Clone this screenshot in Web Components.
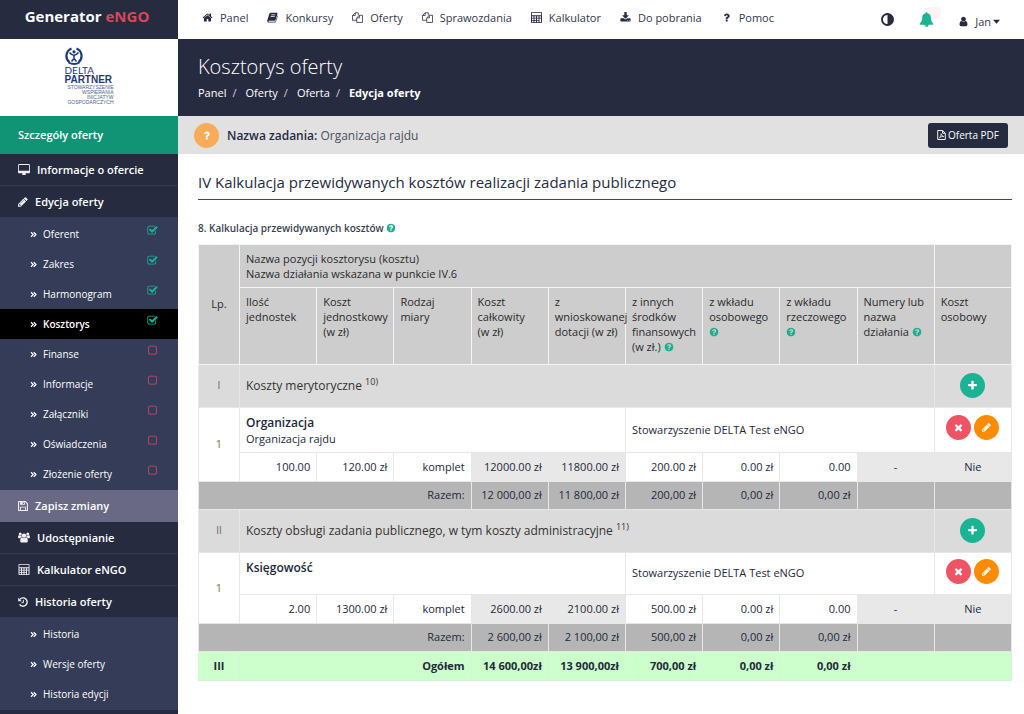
<!DOCTYPE html>
<html lang="pl">
<head>
<meta charset="utf-8">
<meta name="viewport" content="width=device-width, initial-scale=1">
<title>Generator eNGO – Kosztorys oferty</title>
<style>
  html, body { margin: 0; }
  body { font: 11px/15px "Open Sans", sans-serif; color: #23293b; background: #fff; }
</style>
</head>
<body>
<engo-app></engo-app>

<script>
/* ---------- icons ---------- */
const ICONS = {
  home: ['0 0 1792 1792', '<path d="M1472 992v480q0 26-19 45t-45 19h-384v-384h-256v384h-384q-26 0-45-19t-19-45v-480q0-1 .5-3t.5-3l575-474 575 474q1 2 1 6zm223-69l-62 74q-8 9-21 11h-3q-13 0-21-7l-692-577-692 577q-12 8-24 7-13-2-21-11l-62-74q-8-10-7-23.5t11-21.5l719-599q32-26 76-26t76 26l244 204v-195q0-14 9-23t23-9h192q14 0 23 9t9 23v408l219 182q10 8 11 21.5t-7 23.5z"/>'],
  user: ['0 0 1792 1792', '<path d="M1536 1399q0 109-62.5 187t-150.5 78h-854q-88 0-150.5-78t-62.5-187q0-85 8.5-160.5t31.500-152 58.500-131 94-89 134.500-34.500q131 128 313 128t313-128q76 0 134.500 34.500t94 89 58.500 131 31.500 152 8.500 160.500zm-256-887q0 159-112.500 271.500t-271.500 112.500-271.500-112.500-112.500-271.500 112.500-271.500 271.500-112.500 271.500 112.500 112.500 271.500z"/>'],
  pencil: ['128 128 1560 1560', '<path d="M491 1536l91-91-235-235-91 91v107h128v128h107zm523-928q0-22-22-22-10 0-17 7l-542 542q-7 7-7 17 0 22 22 22 10 0 17-7l542-542q7-7 7-17zm-54-192l416 416-832 832h-416v-416zm683 96q0 53-37 90l-166 166-416-416 166-165q36-38 90-38 53 0 91 38l235 234q37 39 37 91z"/>'],
  plus: ['0 0 1792 1792', '<path d="M1600 736v192q0 40-28 68t-68 28h-416v416q0 40-28 68t-68 28h-192q-40 0-68-28t-28-68v-416h-416q-40 0-68-28t-28-68v-192q0-40 28-68t68-28h416v-416q0-40 28-68t68-28h192q40 0 68 28t28 68v416h416q40 0 68 28t28 68z"/>'],
  times: ['0 0 1792 1792', '<path d="M1490 1322q0 40-28 68l-136 136q-28 28-68 28t-68-28l-294-294-294 294q-28 28-68 28t-68-28l-136-136q-28-28-28-68t28-68l294-294-294-294q-28-28-28-68t28-68l136-136q28-28 68-28t68 28l294 294 294-294q28-28 68-28t68 28l136 136q28 28 28 68t-28 68l-294 294 294 294q28 28 28 68z"/>'],
  help: ['0 0 1792 1792', '<path d="M1024 1376v-192q0-14-9-23t-23-9h-192q-14 0-23 9t-9 23v192q0 14 9 23t23 9h192q14 0 23-9t9-23zm256-672q0-88-55.500-163t-138.500-116-170-41q-243 0-371 213-15 24 8 42l132 100q7 6 19 6 16 0 25-12 53-68 86-92 34-24 86-24 48 0 85.500 26t37.500 59q0 38-20 61t-68 45q-63 28-115.500 86.500t-52.500 125.500v36q0 14 9 23t23 9h192q14 0 23-9t9-23q0-19 21.500-49.500t54.500-49.500q32-18 49-28.500t46-35 44.500-48 28-60.500 12.500-81zm384 192q0 209-103 385.500t-279.500 279.500-385.500 103-385.500-103-279.500-279.500-103-385.500 103-385.500 279.500-279.500 385.500-103 385.500 103 279.500 279.500 103 385.500z"/>'],
  question: ['0 0 1792 1792', '<path d="M1088 1256v240q0 16-12 28t-28 12h-240q-16 0-28-12t-12-28v-240q0-16 12-28t28-12h240q16 0 28 12t12 28zm316-600q0 54-15.500 101t-35 76.500-55 59.500-57.500 43.500-61 35.500q-41 23-68.500 65t-27.500 67q0 17-12 32.500t-28 15.500h-240q-15 0-25.500-18.500t-10.500-37.500v-45q0-83 65-156.500t143-108.500q59-27 84-56t25-76q0-42-46.500-74t-107.500-32q-65 0-108 29-35 25-107 115-13 16-31 16-12 0-25-8l-164-125q-13-10-15.500-25t5.500-28q160-266 464-266 80 0 161 31t146 83 106 127.500 41 158.500z"/>'],
  checked: ['0 0 1792 1792', '<path d="M1472 930v318q0 119-84.500 203.500t-203.500 84.500h-832q-119 0-203.500-84.500t-84.500-203.500v-832q0-119 84.500-203.500t203.500-84.500h832q63 0 117 25 15 7 18 23 3 17-9 29l-49 49q-10 10-23 10-3 0-9-2-23-6-45-6h-832q-66 0-113 47t-47 113v832q0 66 47 113t113 47h832q66 0 113-47t47-113v-254q0-13 9-22l64-64q10-10 23-10 6 0 12 3 20 8 20 29zm231-489l-814 814q-24 24-57 24t-57-24l-430-430q-24-24-24-57t24-57l110-110q24-24 57-24t57 24l263 263 647-647q24-24 57-24t57 24l110 110q24 24 24 57t-24 57z"/>'],
  unchecked: ['0 0 1792 1792', '<path d="M1312 256h-832q-66 0-113 47t-47 113v832q0 66 47 113t113 47h832q66 0 113-47t47-113v-832q0-66-47-113t-113-47zm288 160v832q0 119-84.500 203.500t-203.500 84.500h-832q-119 0-203.500-84.500t-84.500-203.500v-832q0-119 84.500-203.500t203.500-84.500h832q119 0 203.500 84.500t84.500 203.500z"/>'],
  contrast: ['0 0 1792 1792', '<path d="M896 1440v-1088q-148 0-273 73t-198 198-73 273 73 273 198 198 273 73zm768-544q0 209-103 385.500t-279.500 279.500-385.500 103-385.500-103-279.500-279.500-103-385.500 103-385.500 279.500-279.500 385.500-103 385.500 103 279.500 279.500 103 385.500z"/>'],
  bell: ['0 0 1792 1792', '<path d="M912 1696q0-16-16-16-59 0-101.500-42.500t-42.500-101.500q0-16-16-16t-16 16q0 73 51.500 124.500t124.500 51.500q16 0 16-16zm816-288q0 52-38 90t-90 38h-448q0 106-75 181t-181 75-181-75-75-181h-448q-52 0-90-38t-38-90q50-42 91-88t85-119.500 74.500-158.500 50-206 19.500-260q0-152 117-282.500t307-158.500q-8-19-8-39 0-40 28-68t68-28 68 28 28 68q0 20-8 39 190 28 307 158.500t117 282.500q0 139 19.500 260t50 206 74.500 158.500 85 119.500 91 88z"/>'],
  download: ['0 0 1792 1792', '<path d="M1344 1344q0-26-19-45t-45-19-45 19-19 45 19 45 45 19 45-19 19-45zm256 0q0-26-19-45t-45-19-45 19-19 45 19 45 45 19 45-19 19-45zm128-224v320q0 40-28 68t-68 28h-1472q-40 0-68-28t-28-68v-320q0-40 28-68t68-28h465l135 136q58 56 136 56t136-56l136-136h464q40 0 68 28t28 68zm-325-569q17 41-14 70l-448 448q-18 19-45 19t-45-19l-448-448q-31-29-14-70 17-39 59-39h256v-448q0-26 19-45t45-19h256q26 0 45 19t19 45v448h256q42 0 59 39z"/>'],
  desktop: ['0 0 1856 1664', '<path d="M1728 992v-832q0-13-9.500-22.500t-22.500-9.500h-1536q-13 0-22.500 9.500t-9.500 22.500v832q0 13 9.500 22.500t22.500 9.500h1536q13 0 22.500-9.500t9.500-22.500zm128-832v1088q0 66-47 113t-113 47h-544q0 37 16 77.500t32 71 16 43.500q0 26-19 45t-45 19h-448q-26 0-45-19t-19-45q0-14 16-44t32-70 16-78h-544q-66 0-113-47t-47-113v-1088q0-66 47-113t113-47h1536q66 0 113 47t47 113z"/>'],
  book: ['0 0 14 14', '<path d="M4.800 1h7.700q1.200 0 .8 1.300l-2.400 8q-.3.900-1.300.9H2.300q-.7 0-.5.600.2.500.8.500h7.600q.5 0 .7-.5L13.400 4q.6.400.4 1.100l-2.400 7.300q-.3.900-1.200.9H2.400Q.6 13.300.3 11.700q-.1-.7.2-1.500L3 2.300Q3.500 1 4.800 1zM5.500 3.300l-.3.800h5.100l.3-.8zm-.7 2.200l-.3.800h5.100l.3-.8z" fill-rule="evenodd"/>'],
  files: ['0 0 14 14', '<path d="M6 10.500H.6V4.500L4.100 1H8v3.200M4.100 1v3.500H.6M6 13.300V7.500L9.400 4.200h4v9.100zM9.400 4.200v3.300H6" fill="none" stroke="currentColor" stroke-width="1" stroke-linejoin="round"/>'],
  calculator: ['0 0 14 14', '<path d="M1 0h12q1 0 1 1v12q0 1-1 1H1q-1 0-1-1V1q0-1 1-1zm0 1.100v3h12v-3zM1.200 5.400v1.800h2V5.400zm3.200 0v1.800h2V5.400zm3.200 0v1.800h2V5.400zm3.200 0v1.800h2V5.400zM1.200 8.300v1.800h2V8.300zm3.200 0v1.800h2V8.300zm3.200 0v1.800h2V8.300zm3.200 0v4.600h2V8.300zM1.200 11.100v1.800h2v-1.800zm3.200 0v1.800h2v-1.800zm3.200 0v1.800h2v-1.800z" fill-rule="evenodd"/>'],
  floppy: ['0 0 14 14', '<path d="M.8.8h9.500l2.900 2.900v9.500H.8z" fill="none" stroke="currentColor" stroke-width="1.500" stroke-linejoin="round"/><path d="M3 1h6.500v4.300H3zm3.600.8v2.500h1.600V1.800zM3 8h8v5.200H3zm1.200 1.200V13h5.600V9.200z" fill-rule="evenodd"/>'],
  users: ['0 0 16 14', '<circle cx="8" cy="4.400" r="2.900"/><circle cx="3" cy="2.300" r="2"/><circle cx="13" cy="2.300" r="2"/><path d="M5.400 6.900q2.600 1.900 5.200 0 2.500.2 2.500 4.900 0 2-1.800 2H4.700q-1.800 0-1.800-2 0-4.700 2.500-4.900zM1.300 4q1.600 1 3.200.4 0 1.300.7 2.200-1.600.1-2.400 1.300H1.400Q0 7.900 0 6.600 0 4 1.300 4zm13.400 0q-1.600 1-3.200.4 0 1.300-.7 2.200 1.600.1 2.400 1.300h1.400Q16 7.900 16 6.600 16 4 14.700 4z"/>'],
  history: ['0 0 14 14', '<path d="M2.600 3.300a5.800 5.800 0 1 1-.4 7" fill="none" stroke="currentColor" stroke-width="2"/><path d="M.3 1v4.800h4.900z"/><path d="M7.500 4v4H5" fill="none" stroke="currentColor" stroke-width="1.400"/>'],
  chevrons: ['0 0 14 14', '<path d="M2 2.500l4.500 4.500L2 11.500M7.500 2.500L12 7l-4.500 4.500" fill="none" stroke="currentColor" stroke-width="2.400"/>'],
  pdf: ['0 0 12 14', '<path d="M.7.7h6.800l3.800 3.800v8.800H.7zM7.500.7v3.800h3.800" fill="none" stroke="currentColor" stroke-width="1.300" stroke-linejoin="round"/><path d="M2.600 11.700Q5.600 9.500 5.500 5.300M5.500 5.300Q6 8.800 9.400 9.300M3.300 10.200q2.600-1.400 6-1" fill="none" stroke="currentColor" stroke-width="1"/>'],
  caret: ['0 0 14 14', '<path d="M0 3.500h14l-7 8z"/>']
};

class EngoIcon extends HTMLElement {
  connectedCallback() {
    if (this.shadowRoot) return;
    const [box, shape] = ICONS[this.getAttribute('name')];
    this.attachShadow({ mode: 'open' }).innerHTML = `
      <style>
        :host { display: inline-flex; flex: none; width: 12px; height: 12px; }
        svg { width: 100%; height: 100%; fill: currentColor; display: block; }
      </style>
      <svg viewBox="${box}" aria-hidden="true">${shape}</svg>`;
  }
}
customElements.define('engo-icon', EngoIcon);

/* ---------- small helpers ---------- */
class HelpTip extends HTMLElement {
  connectedCallback() {
    if (this.shadowRoot) return;
    this.attachShadow({ mode: 'open' }).innerHTML = `
      <style>
        :host { display: inline-block; vertical-align: -1px; }
        button { display: block; border: 0; padding: 0; background: none; color: #1fae8c; cursor: pointer; }
        engo-icon { display: block; width: 10px; height: 10px; }
      </style>
      <button type="button" aria-label="Pomoc"><engo-icon name="help"></engo-icon></button>`;
  }
}
customElements.define('help-tip', HelpTip);

class RoundButton extends HTMLElement {
  connectedCallback() {
    if (this.shadowRoot) return;
    this.attachShadow({ mode: 'open' }).innerHTML = `
      <style>
        :host { display: inline-block; --tone: #1ab394; }
        :host([tone=red]) { --tone: #ed5565; }
        :host([tone=orange]) { --tone: #ff8c00; }
        :host([tone=amber]) { --tone: #f8ac59; }
        button { display: flex; align-items: center; justify-content: center; box-sizing: border-box;
          width: 25px; height: 25px; border: 0; border-radius: 50%; padding: 0; color: #fff; background: var(--tone); cursor: pointer; }
        engo-icon { width: 11px; height: 11px; }
        :host([icon=pencil]) engo-icon { width: 9px; height: 9px; }
      </style>
      <button type="button" aria-label="${this.getAttribute('label')}"><engo-icon name="${this.getAttribute('icon')}"></engo-icon></button>`;
  }
}
customElements.define('round-button', RoundButton);

/* ---------- top bar ---------- */
class TopLink extends HTMLElement {
  connectedCallback() {
    if (this.shadowRoot) return;
    this.attachShadow({ mode: 'open' }).innerHTML = `
      <style>
        :host { display: block; }
        a { display: flex; align-items: center; gap: 7px; color: #33384a; font-weight: 500; text-decoration: none; white-space: nowrap; }
        engo-icon { width: 11px; height: 11px; color: #262b40; }
      </style>
      <a href="#"><engo-icon name="${this.getAttribute('icon')}"></engo-icon><slot></slot></a>`;
  }
}
customElements.define('top-link', TopLink);

class TopBar extends HTMLElement {
  connectedCallback() {
    if (this.shadowRoot) return;
    this.attachShadow({ mode: 'open' }).innerHTML = `
      <style>
        :host { display: flex; justify-content: space-between; height: 39px; padding: 0 24px; background: #fff; }
        nav { display: flex; gap: 19px; height: 35px; align-items: center; }
        .tools { display: flex; align-items: center; gap: 24px; }
        button { border: 0; padding: 0; background: none; font: inherit; color: #262b40; display: flex; align-items: center; cursor: pointer; }
        .contrast engo-icon { width: 15px; height: 15px; }
        .bell { position: relative; color: #1ab394; }
        .bell engo-icon { width: 15px; height: 15px; position: relative; }
        .badge { position: absolute; left: 8px; top: -5px; width: 14px; height: 12px; border-radius: 3px; background: #fff3f3; }
        .user { gap: 6px; padding-top: 3px; color: #33384a; font-weight: 500; }
        .user engo-icon { width: 11px; height: 11px; color: #262b40; }
        .user .caret { width: 7px; height: 7px; margin-left: -4px; }
      </style>
      <nav aria-label="Główne">
        <top-link icon="home">Panel</top-link>
        <top-link icon="book">Konkursy</top-link>
        <top-link icon="files">Oferty</top-link>
        <top-link icon="files">Sprawozdania</top-link>
        <top-link icon="calculator">Kalkulator</top-link>
        <top-link icon="download">Do pobrania</top-link>
        <top-link icon="question">Pomoc</top-link>
      </nav>
      <div class="tools">
        <button class="contrast" type="button" aria-label="Kontrast"><engo-icon name="contrast"></engo-icon></button>
        <button class="bell" type="button" aria-label="Powiadomienia"><span class="badge"></span><engo-icon name="bell"></engo-icon></button>
        <button class="user" type="button"><engo-icon name="user"></engo-icon>Jan<engo-icon class="caret" name="caret"></engo-icon></button>
      </div>`;
  }
}
customElements.define('top-bar', TopBar);

/* ---------- sidebar ---------- */
class PartnerLogo extends HTMLElement {
  connectedCallback() {
    if (this.shadowRoot) return;
    this.attachShadow({ mode: 'open' }).innerHTML = `
      <style>
        :host { display: flex; justify-content: center; height: 69px; padding-top: 8px; background: #fff; color: #1c3c74; font-family: "Liberation Sans", sans-serif; }
        .mark { width: 49px; }
        svg { display: block; width: 18px; height: 18px; }
        .a { font: 10px/10px Lato, sans-serif; }
        .b { font-weight: 700; font-size: 10px; line-height: 10px; }
        .c { font-size: 5px; line-height: 5px; display: flex; flex-direction: column; align-items: flex-end; color: #4a6390; }
      </style>
      <div class="mark">
        <svg viewBox="0 0 18 18" fill="none" stroke="currentColor" aria-hidden="true">
          <path d="M4.500 15.200A8 8 0 0 1 6.500 1.500" stroke-width="2.200"/>
          <path d="M13.500 15.200A8 8 0 0 0 11.500 1.500" stroke-width="2.200"/>
          <path d="M3.500 15.500Q9 18.500 14.500 15.500" stroke-width="1.800"/>
          <path d="M4.500 5.500Q9 11 13.500 5.500M9 8.500v3.500M9 11.500L6.500 14.500M9 11.500L11.500 14.500" stroke-width="1.500"/>
          <circle cx="9" cy="4.800" r="1.600" fill="currentColor" stroke="none"/>
        </svg>
        <div class="a">DELTA</div>
        <div class="b">PARTNER</div>
        <div class="c"><span>STOWARZYSZENIE</span><span>WSPIERANIA</span><span>INICJATYW</span><span>GOSPODARCZYCH</span></div>
      </div>`;
  }
}
customElements.define('partner-logo', PartnerLogo);

class SideLink extends HTMLElement {
  connectedCallback() {
    if (this.shadowRoot) return;
    this.attachShadow({ mode: 'open' }).innerHTML = `
      <style>
        :host { display: block; border-bottom: 1px solid #31384f; }
        :host([open]) { border-bottom: 0; }
        :host([highlight]) { background: #696985; border-color: #696985; }
        a { display: flex; align-items: center; gap: 7px; height: 31px; padding: 0 18px; color: #fff; font-weight: 600; text-decoration: none; white-space: nowrap; }
        engo-icon { width: 10px; height: 10px; color: #f0f0f4; }
        :host([wide]) engo-icon { width: 12px; height: 11px; }
      </style>
      <a href="#"><engo-icon name="${this.getAttribute('icon')}"></engo-icon><slot></slot></a>`;
  }
}
customElements.define('side-link', SideLink);

class SubLink extends HTMLElement {
  connectedCallback() {
    if (this.shadowRoot) return;
    const state = this.getAttribute('state');
    this.attachShadow({ mode: 'open' }).innerHTML = `
      <style>
        :host { display: block; }
        a { display: flex; align-items: center; height: 30px; padding: 0 20px 0 30px; color: #fff; text-decoration: none; font-size: 10px; font-weight: 500; white-space: nowrap; }
        :host([current]) a { background: #000; font-weight: 600; }
        .arrow { width: 7px; height: 7px; margin-right: 6px; }
        .label { flex: 1; }
        .state { width: 11px; height: 11px; margin-bottom: 7px; }
        .checked { color: #1ab394; }
        .unchecked { color: #d8456b; }
      </style>
      <a href="#"><engo-icon class="arrow" name="chevrons"></engo-icon><span class="label"><slot></slot></span>
      ${state ? `<engo-icon class="state ${state}" name="${state}"></engo-icon>` : ''}</a>`;
  }
}
customElements.define('sub-link', SubLink);

class SideBar extends HTMLElement {
  connectedCallback() {
    if (this.shadowRoot) return;
    this.attachShadow({ mode: 'open' }).innerHTML = `
      <style>
        :host { display: block; background: #262b40; }
        .brand { height: 39px; line-height: 33px; padding-right: 4px; text-align: center; font-size: 15px; font-weight: 700; color: #fff; }
        .brand span { color: #d9475c; }
        h2 { margin: 0; height: 38px; line-height: 38px; padding-left: 18px; background: #119476; color: #fff; font-size: 11px; font-weight: 600; }
        .sub { background: #343c57; padding: 2px 0 1px; }
      </style>
      <div class="brand">Generator <span>eNGO</span></div>
      <partner-logo></partner-logo>
      <h2>Szczegóły oferty</h2>
      <nav aria-label="Oferta">
        <side-link icon="desktop" wide>Informacje o ofercie</side-link>
        <side-link icon="pencil" open>Edycja oferty</side-link>
        <div class="sub">
          <sub-link state="checked">Oferent</sub-link>
          <sub-link state="checked">Zakres</sub-link>
          <sub-link state="checked">Harmonogram</sub-link>
          <sub-link state="checked" current>Kosztorys</sub-link>
          <sub-link state="unchecked">Finanse</sub-link>
          <sub-link state="unchecked">Informacje</sub-link>
          <sub-link state="unchecked">Załączniki</sub-link>
          <sub-link state="unchecked">Oświadczenia</sub-link>
          <sub-link state="unchecked">Złożenie oferty</sub-link>
        </div>
        <side-link icon="floppy" highlight>Zapisz zmiany</side-link>
        <side-link icon="users" wide>Udostępnianie</side-link>
        <side-link icon="calculator" wide>Kalkulator eNGO</side-link>
        <side-link icon="history" open>Historia oferty</side-link>
        <div class="sub">
          <sub-link>Historia</sub-link>
          <sub-link>Wersje oferty</sub-link>
          <sub-link>Historia edycji</sub-link>
        </div>
      </nav>`;
  }
}
customElements.define('side-bar', SideBar);

/* ---------- page heading and task bar ---------- */
class PageHeading extends HTMLElement {
  connectedCallback() {
    if (this.shadowRoot) return;
    this.attachShadow({ mode: 'open' }).innerHTML = `
      <style>
        :host { display: block; box-sizing: border-box; height: 77px; padding: 14px 20px 0; background: #262b40; color: #fff; }
        h1 { margin: 0 0 5px; font-size: 20px; line-height: 27px; font-weight: 300; }
        ol { display: flex; margin: 0; padding: 0; list-style: none; line-height: 15px; font-weight: 500; }
        li + li::before { content: "/"; padding: 0 9px 0 6px; color: #d0d2da; }
        a { color: inherit; text-decoration: none; }
        strong { font-weight: 700; }
      </style>
      <h1>Kosztorys oferty</h1>
      <nav aria-label="Ścieżka"><ol>
        <li><a href="#">Panel</a></li><li><a href="#">Oferty</a></li><li><a href="#">Oferta</a></li><li aria-current="page"><strong>Edycja oferty</strong></li>
      </ol></nav>`;
  }
}
customElements.define('page-heading', PageHeading);

class TaskBar extends HTMLElement {
  connectedCallback() {
    if (this.shadowRoot) return;
    this.attachShadow({ mode: 'open' }).innerHTML = `
      <style>
        :host { display: flex; align-items: center; height: 38px; padding: 0 16px; background: #e1e1e1; }
        p { flex: 1; margin: 0 0 0 8px; font-size: 12px; color: #4a4f60; }
        strong { font-weight: 600; color: #262b40; }
        .pdf { display: flex; align-items: center; gap: 2px; height: 25px; border: 0; border-radius: 3px; padding: 0 9px; background: #262b40; color: #fff; font: inherit; font-size: 10px; cursor: pointer; }
        .pdf engo-icon { width: 9px; height: 10px; }
      </style>
      <round-button tone="amber" icon="question" label="Pomoc"></round-button>
      <p><strong>Nazwa zadania:</strong> Organizacja rajdu</p>
      <button class="pdf" type="button"><engo-icon name="pdf"></engo-icon>Oferta PDF</button>`;
  }
}
customElements.define('task-bar', TaskBar);

/* ---------- cost table ---------- */
const SECTIONS = [
  { no: 'I', name: 'Koszty merytoryczne', note: '10)',
    item: 'Organizacja', desc: 'Organizacja rajdu', kind: 'tall', owner: 'Stowarzyszenie DELTA Test eNGO',
    values: ['100.00', '120.00 zł', 'komplet', '12000.00 zł', '11800.00 zł', '200.00 zł', '0.00 zł', '0.00'],
    sums: ['12 000,00 zł', '11 800,00 zł', '200,00 zł', '0,00 zł', '0,00 zł'] },
  { no: 'II', name: 'Koszty obsługi zadania publicznego, w tym koszty administracyjne', note: '11)',
    item: 'Księgowość', desc: '', kind: 'short', owner: 'Stowarzyszenie DELTA Test eNGO',
    values: ['2.00', '1300.00 zł', 'komplet', '2600.00 zł', '2100.00 zł', '500.00 zł', '0.00 zł', '0.00'],
    sums: ['2 600,00 zł', '2 100,00 zł', '500,00 zł', '0,00 zł', '0,00 zł'] }
];

const sectionRows = s => `
  <tr class="section">
    <td class="no">${s.no}</td>
    <td colspan="9">${s.name} <sup>${s.note}</sup></td>
    <td class="act"><round-button icon="plus" label="Dodaj"></round-button></td>
  </tr>
  <tr class="item ${s.kind}">
    <td class="no idx" rowspan="2">1</td>
    <td colspan="5" class="name"><b>${s.item}</b>${s.desc ? `<br>${s.desc}` : ''}</td>
    <td colspan="4">${s.owner}</td>
    <td class="act"><div><round-button tone="red" icon="times" label="Usuń"></round-button><round-button tone="orange" icon="pencil" label="Edytuj"></round-button></div></td>
  </tr>
  <tr class="values">
    ${s.values.map((v, i) => `<td${i === 3 || i === 4 ? ' class="calc"' : ''}>${v}</td>`).join('')}
    <td class="calc mid">-</td><td class="calc mid">Nie</td>
  </tr>
  <tr class="sum">
    <td colspan="4">Razem:</td>${s.sums.map(v => `<td>${v}</td>`).join('')}<td></td><td></td>
  </tr>`;

class CostTable extends HTMLElement {
  connectedCallback() {
    if (this.shadowRoot) return;
    this.attachShadow({ mode: 'open' }).innerHTML = `
      <style>
        :host { display: block; }
        table { width: 100%; table-layout: fixed; border-collapse: collapse; }
        .first { width: 41px; }
        th, td { box-sizing: border-box; padding: 0 6px 2px; border: 1px solid #e7e7e7; font-weight: 400; text-align: left; }
        th { background: #cdcdcd; color: #2a2a2a; border-color: #f4f4f4; vertical-align: top; padding-top: 6px; }
        .cols th { padding-right: 0; }
        th.lp { vertical-align: middle; text-align: center; padding-top: 0; }
        .top th { height: 43px; }
        .cols th { height: 77px; }
        .no { text-align: center; }
        .act { text-align: center; line-height: 0; }
        .act div { display: flex; gap: 3px; justify-content: center; padding-bottom: 3px; }
        .section td { height: 43px; background: #dbdbdb; font-size: 12px; color: #333; }
        .section .no { font-size: 10px; color: #666; }
        sup { font-size: 9px; line-height: 0; }
        .tall td { height: 45px; }
        .short td { height: 42px; }
        .item .name { vertical-align: top; padding-top: 7px; }
        .item b { font-size: 12px; font-weight: 600; line-height: 16px; }
        .item .idx { color: #777a30; }
        .values td { height: 29px; text-align: right; }
        .values .calc { background: #e8e8e8; border-left-color: #d2d2d2; }
        .values .mid { text-align: center; }
        .sum td { height: 28px; background: #b5b5b5; text-align: right; }
        .total td { height: 29px; background: #cfc; border-color: #d5f5d5; text-align: right; font-weight: 700; }
        .total .no { text-align: center; }
      </style>
      <table>
        <colgroup><col class="first"><col span="10"></colgroup>
        <thead>
          <tr class="top">
            <th class="lp" rowspan="2">Lp.</th>
            <th colspan="9">Nazwa pozycji kosztorysu (kosztu)<br>Nazwa działania wskazana w punkcie IV.6</th>
            <th></th>
          </tr>
          <tr class="cols">
            <th>Ilość<br>jednostek</th><th>Koszt jednostkowy (w zł)</th><th>Rodzaj<br>miary</th><th>Koszt całkowity<br>(w zł)</th>
            <th>z wnioskowanej dotacji (w zł)</th><th>z innych środków finansowych (w zł.) <help-tip></help-tip></th>
            <th>z wkładu osobowego<br><help-tip></help-tip></th><th>z wkładu rzeczowego<br><help-tip></help-tip></th>
            <th>Numery lub nazwa<br>działania <help-tip></help-tip></th><th>Koszt osobowy</th>
          </tr>
        </thead>
        <tbody>
          ${SECTIONS.map(sectionRows).join('')}
          <tr class="total">
            <td class="no">III</td><td colspan="3">Ogółem</td><td>14 600,00zł</td><td>13 900,00zł</td><td>700,00 zł</td><td>0,00 zł</td><td>0,00 zł</td><td></td><td></td>
          </tr>
        </tbody>
      </table>`;
  }
}
customElements.define('cost-table', CostTable);

/* ---------- page ---------- */
class EngoApp extends HTMLElement {
  connectedCallback() {
    if (this.shadowRoot) return;
    this.attachShadow({ mode: 'open' }).innerHTML = `
      <style>
        :host { display: grid; grid-template-columns: 178px 1fr; min-height: 100vh; }
        .page { min-width: 0; }
        main { padding: 18px 12px 20px 20px; }
        h2 { margin: 0 0 21px; padding-bottom: 7px; border-bottom: 1px solid #3d4a66; font-size: 15px; line-height: 20px; font-weight: 500; color: #262b40; }
        h3 { margin: 0 0 8px; font-size: 10px; line-height: 15px; font-weight: 600; color: #3a3f51; }
      </style>
      <side-bar></side-bar>
      <div class="page">
        <top-bar></top-bar>
        <page-heading></page-heading>
        <task-bar></task-bar>
        <main>
          <h2>IV Kalkulacja przewidywanych kosztów realizacji zadania publicznego</h2>
          <h3>8. Kalkulacja przewidywanych kosztów <help-tip></help-tip></h3>
          <cost-table></cost-table>
        </main>
      </div>`;
  }
}
customElements.define('engo-app', EngoApp);
</script>
</body>
</html>
